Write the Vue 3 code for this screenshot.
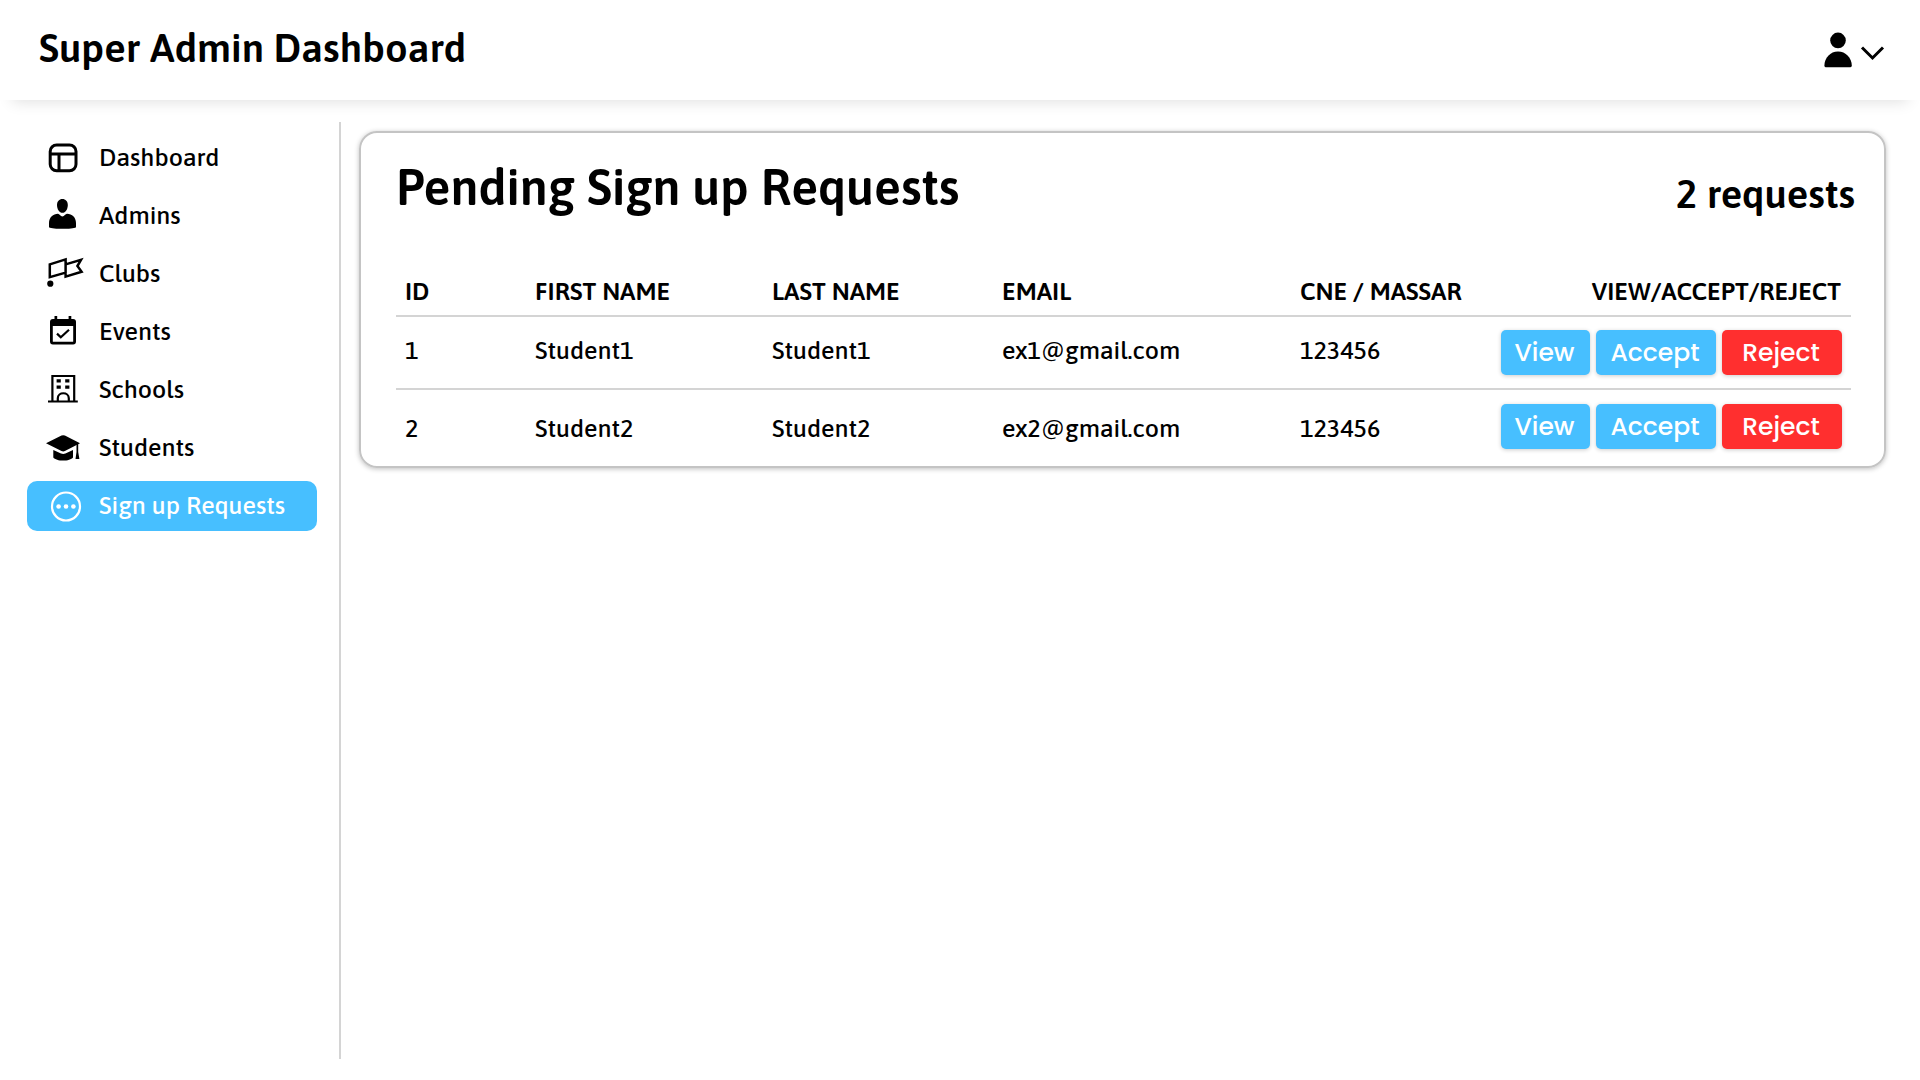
<script setup>
import { ref } from 'vue'

const active = ref('signup')

const links = [
  { id: 'dashboard', label: 'Dashboard' },
  { id: 'admins', label: 'Admins' },
  { id: 'clubs', label: 'Clubs' },
  { id: 'events', label: 'Events' },
  { id: 'schools', label: 'Schools' },
  { id: 'students', label: 'Students' },
  { id: 'signup', label: 'Sign up Requests' },
]

const requests = ref([
  { id: 1, first: 'Student1', last: 'Student1', email: 'ex1@gmail.com', cne: '123456' },
  { id: 2, first: 'Student2', last: 'Student2', email: 'ex2@gmail.com', cne: '123456' },
])
</script>

<template>
  <div class="page">
    <header class="topbar">
      <h1 class="brand">Super Admin Dashboard</h1>
      <button class="account" type="button" aria-label="Account menu">
        <svg width="64" height="40" viewBox="0 0 64 40" aria-hidden="true">
          <circle cx="16" cy="10.4" r="7.8" />
          <path d="M3.6 37.2Q2.4 37.2 2.4 35.8C2.4 28 8.3 21.6 16 21.6S29.8 28 29.8 35.8Q29.8 37.2 28.4 37.2Z" />
          <path d="M40 17.5 50.5 28 61 17.5" fill="none" stroke="#000" stroke-width="3" />
        </svg>
      </button>
    </header>

    <div class="body">
      <nav class="sidebar" aria-label="Main">
        <a
          v-for="link in links"
          :key="link.id"
          href="#"
          class="link"
          :class="{ active: link.id === active }"
          @click.prevent="active = link.id"
        >
          <svg class="icon" viewBox="0 0 40 40" aria-hidden="true">
            <g v-if="link.id === 'dashboard'" fill="none" stroke="currentColor" stroke-width="3">
              <rect x="6.2" y="7" width="25.8" height="25.8" rx="6.5" />
              <path d="M6.2 16H32M15 16V33" />
            </g>
            <g v-else-if="link.id === 'admins'" fill="currentColor">
              <path d="M18.4 3c3.2 0 5.4 2.4 5.4 6 0 4.4-2.4 7.8-5.4 7.8S13 13.4 13 9c0-3.6 2.2-6 5.4-6Z" />
              <path d="M5 31.2V27c0-5.6 4.2-9.2 9-9.2 1.4 0 2.4 2.6 4.4 2.6s3-2.6 4.6-2.6c5 0 9 3.6 9 9.2v4.2C28.5 33.4 9 33.4 5 31.2Z" />
            </g>
            <g v-else-if="link.id === 'clubs'" fill="none" stroke="currentColor" stroke-width="2.5">
              <path d="M5.8 10.4 21.6 5.4V18.6L5.8 23.2ZM21.6 10.4 37 5.8 33.4 12 37.6 17.8 21.6 22.6Z" />
              <circle cx="6.3" cy="29.7" r="3.1" fill="currentColor" stroke="none" />
            </g>
            <g v-else-if="link.id === 'events'">
              <rect x="7.4" y="8.3" width="23.2" height="22.8" rx="1.5" fill="none" stroke="currentColor" stroke-width="2.8" />
              <path d="M7 8H31V14H7ZM10.5 4H13.2V9H10.5ZM24.6 4H27.3V9H24.6Z" fill="currentColor" />
              <path d="M13 21.6 16.8 25.3 25 17.8" fill="none" stroke="currentColor" stroke-width="2.2" />
            </g>
            <g v-else-if="link.id === 'schools'">
              <path d="M8.4 31V6H30.2V31M4 31.5H33.8M13.8 31V28.2C13.8 21.6 24.8 21.6 24.8 28.2V31" fill="none" stroke="currentColor" stroke-width="2.2" />
              <path d="M12.6 9.3h4.2v3.2h-4.2ZM21.2 9.3h4.2v3.2h-4.2ZM12.6 15.6h4.2v3.2h-4.2ZM21.2 15.6h4.2v3.2h-4.2Z" fill="currentColor" />
            </g>
            <g v-else-if="link.id === 'students'" fill="currentColor">
              <path d="M2 15.2 17.5 7.6Q19.2 7 20.9 7.6L36 15.2 20.9 23Q19.2 23.8 17.5 23Z" />
              <path d="M9.3 22 17 25.5Q19.2 26.3 21.4 25.5L29 22V29.5C26 33.6 12.3 33.6 9.3 29.5Z" />
              <path d="M32.5 15.5H34.2V24L35.4 31H31.5L32.5 24Z" />
            </g>
            <g v-else>
              <circle cx="22" cy="20.5" r="14" fill="none" stroke="currentColor" stroke-width="2.2" />
              <g fill="currentColor">
                <circle cx="14.6" cy="20.5" r="2.3" />
                <circle cx="22" cy="20.5" r="2.3" />
                <circle cx="29.4" cy="20.5" r="2.3" />
              </g>
            </g>
          </svg>
          <span class="link-label">{{ link.label }}</span>
        </a>
      </nav>

      <main class="content">
        <section class="card">
          <div class="card-head">
            <h2 class="title">Pending Sign up Requests</h2>
            <p class="count">{{ requests.length }} requests</p>
          </div>
          <table class="table">
            <colgroup>
              <col class="c-id" />
              <col class="c-first" />
              <col class="c-last" />
              <col class="c-email" />
              <col class="c-cne" />
              <col />
            </colgroup>
            <thead>
              <tr>
                <th scope="col">ID</th>
                <th scope="col">FIRST NAME</th>
                <th scope="col">LAST NAME</th>
                <th scope="col">EMAIL</th>
                <th scope="col">CNE / MASSAR</th>
                <th scope="col" class="right">VIEW/ACCEPT/REJECT</th>
              </tr>
            </thead>
            <tbody>
              <tr v-for="r in requests" :key="r.id">
                <td>{{ r.id }}</td>
                <td>{{ r.first }}</td>
                <td>{{ r.last }}</td>
                <td>{{ r.email }}</td>
                <td>{{ r.cne }}</td>
                <td class="actions-cell">
                  <div class="actions">
                    <button type="button" class="btn view">View</button>
                    <button type="button" class="btn">Accept</button>
                    <button type="button" class="btn reject">Reject</button>
                  </div>
                </td>
              </tr>
            </tbody>
          </table>
        </section>
      </main>
    </div>
  </div>
</template>

<style>
body {
  margin: 0;
  background: #fff;
}
</style>

<style scoped>
.page {
  display: flex;
  flex-direction: column;
  min-height: 100vh;
  color: #000;
  font-family: Asap, Lato, sans-serif;
  font-size: 25px;
  font-weight: 500;
}
.topbar {
  display: flex;
  align-items: center;
  justify-content: space-between;
  box-sizing: border-box;
  height: 100px;
  padding: 0 34px 0 39px;
  box-shadow: 0 14px 14px -12px rgba(0, 0, 0, 0.12);
}
.brand {
  margin: 0;
  padding-bottom: 4px;
  font-size: 40px;
  line-height: 48px;
  font-weight: 600;
}
.account {
  display: flex;
  padding: 0;
  border: 0;
  background: none;
  cursor: pointer;
}
.body {
  display: flex;
  flex: 1;
  margin: 22px 34px 21px 27px;
}
.sidebar {
  display: flex;
  flex-direction: column;
  gap: 8px;
  box-sizing: border-box;
  width: 314px;
  flex-shrink: 0;
  padding: 11px 22px 0 0;
  border-right: 2px solid #d4d4d4;
}
.link {
  display: flex;
  align-items: center;
  gap: 15px;
  height: 50px;
  padding-left: 17px;
  border-radius: 10px;
  color: #000;
  text-decoration: none;
}
.link.active {
  background: #47bfff;
  color: #fff;
}
.link-label {
  padding-bottom: 2px;
}
.icon {
  width: 40px;
  height: 40px;
  flex-shrink: 0;
}
.content {
  flex: 1;
  min-width: 0;
  padding: 9px 0 0 18px;
}
.card {
  padding: 24px 33px 0 35px;
  border: 2px solid #c4c4c4;
  border-radius: 18px;
  box-shadow: 0 1px 5px rgba(0, 0, 0, 0.25);
}
.card-head {
  display: flex;
  align-items: flex-start;
  justify-content: space-between;
  margin-right: -4px;
}
.title {
  margin: 0;
  font-size: 50px;
  line-height: 60px;
  font-weight: 600;
}
.count {
  margin: 13px 0 0;
  font-size: 40px;
  line-height: 47px;
  font-weight: 600;
}
.table {
  width: 100%;
  margin-top: 46px;
  border-collapse: separate;
  border-spacing: 0;
  table-layout: fixed;
}
.c-id {
  width: 130px;
}
.c-first {
  width: 237px;
}
.c-last {
  width: 230px;
}
.c-email {
  width: 298px;
}
.c-cne {
  width: 190px;
}
th,
td {
  box-sizing: border-box;
  padding: 0 9px;
  text-align: left;
  vertical-align: middle;
  white-space: nowrap;
}
th {
  height: 54px;
  padding-top: 4px;
  border-bottom: 2px solid #d4d4d4;
  font-weight: 600;
}
th.right {
  padding-right: 10px;
  text-align: right;
}
td {
  height: 73px;
  padding-bottom: 6px;
  border-bottom: 2px solid #d4d4d4;
}
td.actions-cell {
  padding-top: 13px;
  padding-bottom: 0;
  vertical-align: top;
}
tr:last-child td {
  height: 76px;
  padding-bottom: 0;
  border-bottom: 0;
}
tr:last-child td.actions-cell {
  padding-top: 14px;
}
.actions {
  display: flex;
  justify-content: flex-end;
  gap: 6px;
}
.btn {
  width: 120px;
  height: 45px;
  padding: 0 2px 0 0;
  border: 0;
  border-radius: 5px;
  background: #47bfff;
  box-shadow: 0 1px 4px rgba(0, 0, 0, 0.2);
  color: #fff;
  font-family: Poppins, Inter, sans-serif;
  font-size: 25px;
  font-weight: 500;
  cursor: pointer;
}
.btn.view {
  width: 89px;
}
.btn.reject {
  background: #ff2f2f;
}
</style>
